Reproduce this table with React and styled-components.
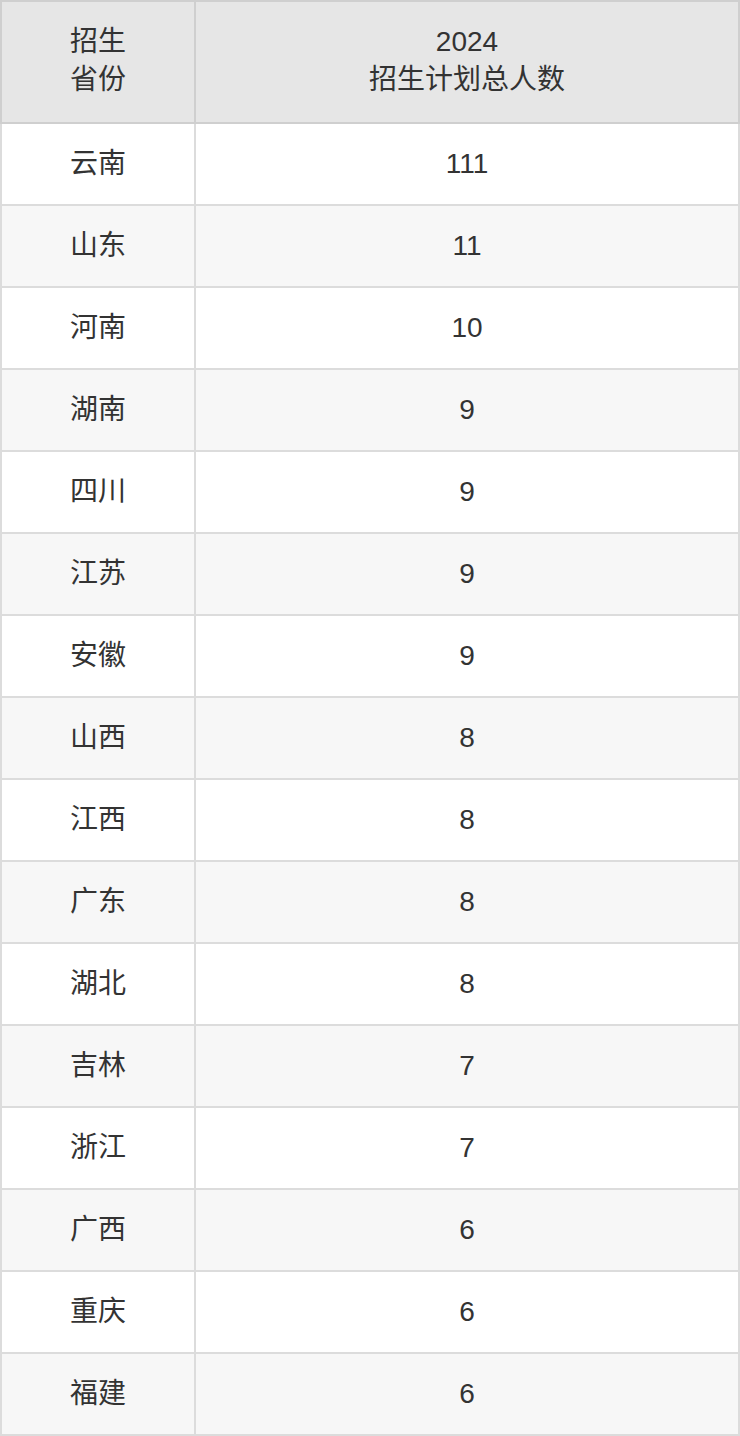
import React from 'react';
import styled, { createGlobalStyle } from 'styled-components';

const GlobalStyle = createGlobalStyle`
    html, body {
        margin: 0;
        padding: 0;
        background: #ffffff;
    }
    body {
        font-family: "Liberation Sans", "Noto Sans CJK SC", sans-serif;
        color: #333333;
    }
`

const StyledTable = styled.div`
    width: 740px;
    display: grid;
    grid-template-columns: 196px 1fr;
`

const StyledCell = styled.div`
    box-sizing: border-box;
    display: flex;
    flex-direction: column;
    align-items: center;
    justify-content: center;
    text-align: center;
    font-size: 28px;
    line-height: 38px;
    color: #333333;
    height: ${props => props.header ? '124px' : '82px'};
    padding-bottom: ${props => props.header ? '2px' : '0'};
    background: ${props => props.header ? '#e6e6e6' : (props.striped ? '#f7f7f7' : '#ffffff')};
    border-right: 2px solid ${props => props.header ? '#cfcfcf' : '#dcdcdc'};
    border-bottom: 2px solid ${props => props.header ? '#cfcfcf' : '#dcdcdc'};
    border-top: ${props => props.header ? '2px solid #cfcfcf' : 'none'};
    border-left: ${props => props.first ? `2px solid ${props.header ? '#cfcfcf' : '#dcdcdc'}` : 'none'};
`

const rows = [
    ['云南', '111'],
    ['山东', '11'],
    ['河南', '10'],
    ['湖南', '9'],
    ['四川', '9'],
    ['江苏', '9'],
    ['安徽', '9'],
    ['山西', '8'],
    ['江西', '8'],
    ['广东', '8'],
    ['湖北', '8'],
    ['吉林', '7'],
    ['浙江', '7'],
    ['广西', '6'],
    ['重庆', '6'],
    ['福建', '6'],
];

export default function App() {
    return (
        <>
            <GlobalStyle />
            <StyledTable>
                <StyledCell header first>
                    <span>招生</span>
                    <span>省份</span>
                </StyledCell>
                <StyledCell header>
                    <span>2024</span>
                    <span>招生计划总人数</span>
                </StyledCell>
                {rows.map(([province, count], i) => (
                    <React.Fragment key={province + i}>
                        <StyledCell first striped={i % 2 === 1}>{province}</StyledCell>
                        <StyledCell striped={i % 2 === 1}>{count}</StyledCell>
                    </React.Fragment>
                ))}
            </StyledTable>
        </>
    )
}
